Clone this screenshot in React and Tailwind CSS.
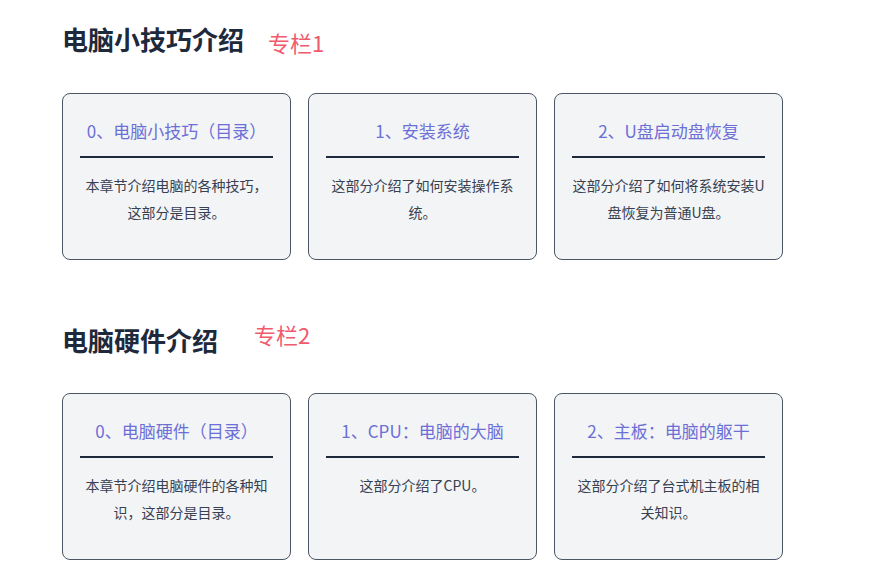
import React from "react";

const sections = [
  {
    title: "电脑小技巧介绍",
    tag: "专栏1",
    tagClass: "ml-[24px] translate-y-[3px]",
    cards: [
      { t: "0、电脑小技巧（目录）", d: "本章节介绍电脑的各种技巧，这部分是目录。" },
      { t: "1、安装系统", d: "这部分介绍了如何安装操作系统。" },
      { t: "2、U盘启动盘恢复", d: "这部分介绍了如何将系统安装U盘恢复为普通U盘。" },
    ],
  },
  {
    title: "电脑硬件介绍",
    tag: "专栏2",
    tagClass: "ml-[36px] -translate-y-[6px]",
    cards: [
      { t: "0、电脑硬件（目录）", d: "本章节介绍电脑硬件的各种知识，这部分是目录。" },
      { t: "1、CPU：电脑的大脑", d: "这部分介绍了CPU。" },
      { t: "2、主板：电脑的躯干", d: "这部分介绍了台式机主板的相关知识。" },
    ],
  },
];

function Card({ t, d }) {
  return (
    <div className="w-[229px] h-[167px] rounded-lg border border-[#4b5563] bg-[#f3f4f6] px-[17px] pt-[24px] flex flex-col">
      <div className="text-[17px] leading-[26px] text-[#6b6fd6] text-center whitespace-nowrap">{t}</div>
      <div className="mt-[12px] h-[2px] bg-[#1e293b]" />
      <div className="mt-[14px] text-[14px] leading-[27px] text-[#374151] text-center">{d}</div>
    </div>
  );
}

export default function App() {
  return (
    <div
      className="w-[870px] h-[575px] bg-white pl-[62px] pt-[19px] overflow-hidden"
      style={{ fontFamily: '"Noto Sans CJK SC", "Noto Sans", sans-serif' }}
    >
      {sections.map((s, i) => (
        <div key={i} className={i === 0 ? "" : "mt-[60px]"}>
          <div className="flex items-center h-[40px]">
            <div className="text-[26px] font-bold text-[#1e293b] leading-[40px]">{s.title}</div>
            <div className={"text-[22px] text-[#ef5a6d] leading-[30px] " + s.tagClass}>{s.tag}</div>
          </div>
          <div className={"flex gap-[17px] " + (i === 0 ? "mt-[34px]" : "mt-[33px]")}>
            {s.cards.map((c, j) => (
              <Card key={j} {...c} />
            ))}
          </div>
        </div>
      ))}
    </div>
  );
}
